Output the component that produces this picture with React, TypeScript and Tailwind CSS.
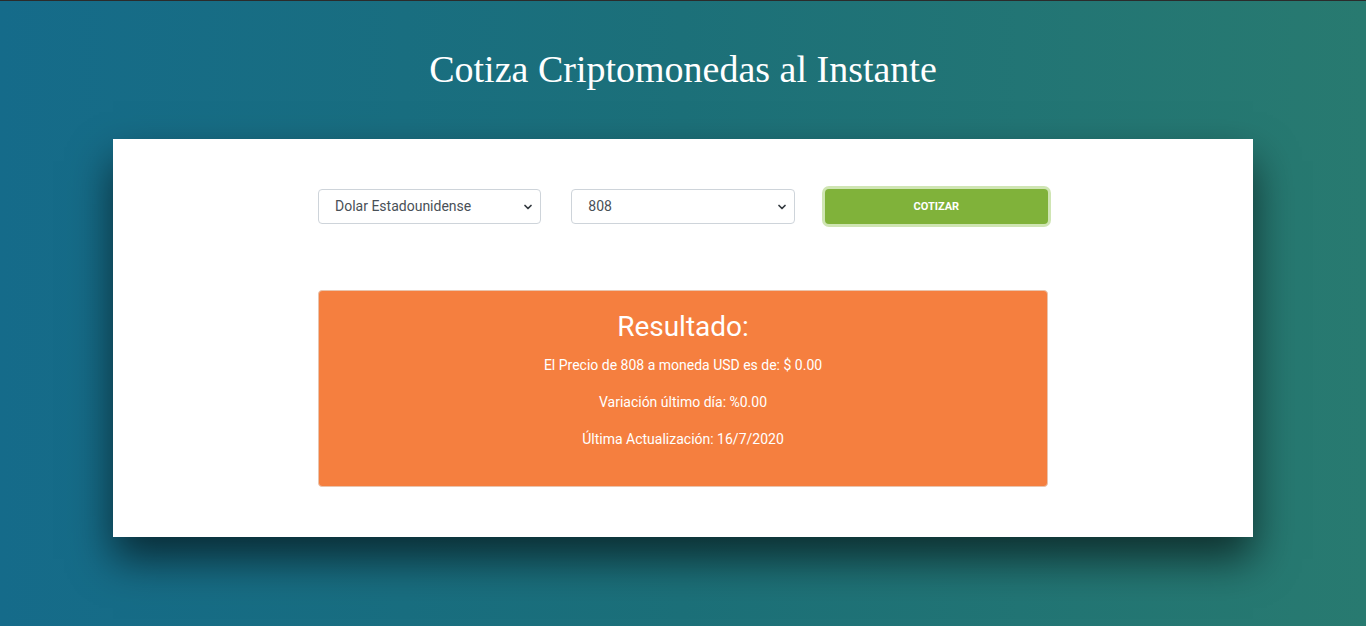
import { ChevronDown } from "lucide-react";

const monedas = [
  { codigo: "USD", nombre: "Dolar Estadounidense" },
  { codigo: "MXN", nombre: "Peso Mexicano" },
  { codigo: "EUR", nombre: "Euro" },
  { codigo: "GBP", nombre: "Libra Esterlina" },
];

const criptos = ["808", "BTC", "ETH", "XRP"];

function Select({ options, value }: { options: { value: string; label: string }[]; value: string }) {
  return (
    <div className="relative w-full">
      <select
        defaultValue={value}
        className="w-full h-[35px] appearance-none bg-white border border-[#ced4da] rounded-[4px] pl-4 pr-8 text-[14px] text-[#495057] outline-none"
      >
        {options.map((o) => (
          <option key={o.value} value={o.value}>
            {o.label}
          </option>
        ))}
      </select>
      <ChevronDown
        strokeWidth={3.5}
        className="pointer-events-none absolute right-[7px] top-1/2 -translate-y-1/2 h-[12px] w-[12px] text-[#343a40]"
      />
    </div>
  );
}

export default function App() {
  return (
    <div
      className="min-h-screen border-t border-[#2b2b2b] bg-gradient-to-r from-[#156b8a] via-[#1c7079] to-[#287a70]"
      style={{ fontFamily: "Roboto, 'Liberation Sans', sans-serif" }}
    >
      {/* Titulo */}
      <div className="pt-[45px] mb-[47px] text-center">
        <h1
          className="text-[38px] leading-[46px] text-white"
          style={{ fontFamily: "'Liberation Serif', 'DejaVu Serif', serif" }}
        >
          Cotiza Criptomonedas al Instante
        </h1>
      </div>

      {/* Contenedor principal */}
      <div className="mx-auto w-[1140px] bg-white py-[50px] shadow-[0_22px_40px_rgba(0,0,0,0.6)]">
        <div className="mx-auto w-[760px]">
          <form className="flex" onSubmit={(e) => e.preventDefault()}>
            <div className="w-1/3 px-[15px]">
              <Select
                value="USD"
                options={monedas.map((m) => ({ value: m.codigo, label: m.nombre }))}
              />
            </div>
            <div className="w-1/3 px-[15px]">
              <Select value="808" options={criptos.map((c) => ({ value: c, label: c }))} />
            </div>
            <div className="w-1/3 px-[15px]">
              <button
                type="submit"
                className="w-full h-[35px] rounded-[4px] bg-[#80b23a] pt-[2px] text-white text-[11px] font-bold uppercase ring-[3px] ring-[#cfe5b3]"
              >
                Cotizar
              </button>
            </div>
          </form>

          {/* Resultado */}
          <div className="mx-[15px] mt-[66px] rounded-[4px] border border-[#e9c4ad] bg-[#f57f3f] px-5 pt-[19px] pb-[20px] text-center text-white">
            <h2 className="text-[28px] leading-[34px] mb-[11px]">Resultado:</h2>
            <p className="text-[14px] leading-[21px] mb-4">El Precio de 808 a moneda USD es de: $ 0.00</p>
            <p className="text-[14px] leading-[21px] mb-4">Variación último día: %0.00</p>
            <p className="text-[14px] leading-[21px] mb-4">Última Actualización: 16/7/2020</p>
          </div>
        </div>
      </div>
    </div>
  );
}
